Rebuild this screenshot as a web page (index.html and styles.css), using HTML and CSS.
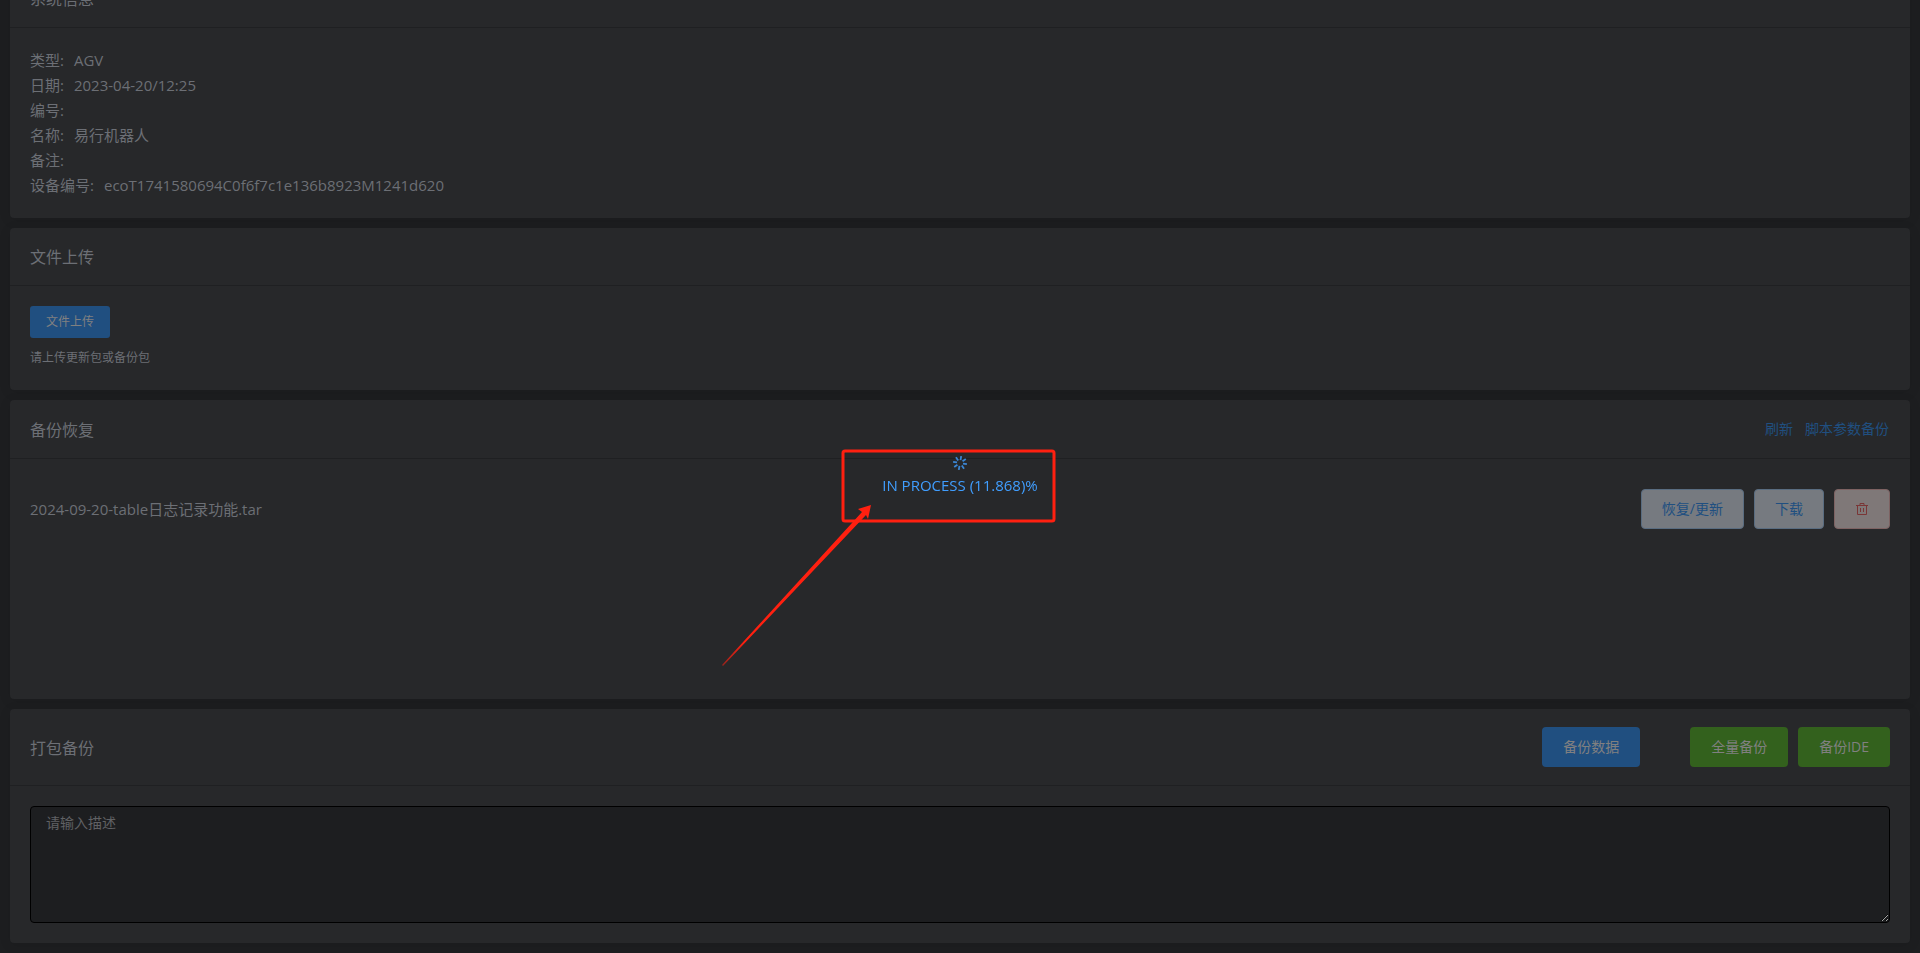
FILE: index.html
```html
<!DOCTYPE html>
<html lang="zh-CN">
<head>
  <meta charset="UTF-8">
  <meta name="viewport" content="width=device-width, initial-scale=1.0">
  <title>系统信息</title>
  <link rel="stylesheet" href="styles.css">
</head>
<body>

  <main class="page">

    <section class="card">
      <div class="card-header">
        <h2>系统信息</h2>
      </div>
      <div class="card-body">
        <dl class="info">
          <div><dt>类型:</dt><dd>AGV</dd></div>
          <div><dt>日期:</dt><dd>2023-04-20/12:25</dd></div>
          <div><dt>编号:</dt><dd></dd></div>
          <div><dt>名称:</dt><dd>易行机器人</dd></div>
          <div><dt>备注:</dt><dd></dd></div>
          <div><dt>设备编号:</dt><dd>ecoT1741580694C0f6f7c1e136b8923M1241d620</dd></div>
        </dl>
      </div>
    </section>

    <section class="card">
      <div class="card-header">
        <h2>文件上传</h2>
      </div>
      <div class="card-body">
        <button type="button" class="btn btn-primary btn-small">文件上传</button>
        <p class="tip">请上传更新包或备份包</p>
      </div>
    </section>

    <section class="card">
      <div class="card-header">
        <h2>备份恢复</h2>
        <div class="links">
          <a href="#">刷新</a>
          <a href="#">脚本参数备份</a>
        </div>
      </div>
      <div class="card-body backup-list">
        <div class="backup-item">
          <span>2024-09-20-table日志记录功能.tar</span>
          <div class="actions">
            <button type="button" class="btn btn-plain">恢复/更新</button>
            <button type="button" class="btn btn-plain">下载</button>
            <button type="button" class="btn btn-danger" aria-label="删除">
              <svg width="14" height="14" viewBox="0 0 14 14" fill="none" stroke="currentColor">
                <path d="M1 3.500h12M2.500 3.500v9h9v-9M5 3V1.500h4V3M5.500 6v4M8.500 6v4"/>
              </svg>
            </button>
          </div>
        </div>
      </div>
    </section>

    <section class="card">
      <div class="card-header">
        <h2><label for="desc">打包备份</label></h2>
        <div class="actions">
          <button type="button" class="btn btn-primary btn-data">备份数据</button>
          <button type="button" class="btn btn-success">全量备份</button>
          <button type="button" class="btn btn-success">备份IDE</button>
        </div>
      </div>
      <div class="card-body">
        <textarea id="desc" placeholder="请输入描述"></textarea>
      </div>
    </section>

  </main>

  <!-- loading -->
  <div class="loading">
    <svg class="spinner" width="14" height="14" viewBox="0 0 14 14" stroke="currentColor" stroke-width="1.8">
      <g transform="rotate(10 7 7)">
        <path d="M7 0v4M7 10v4M0 7h4M10 7h4M2 2l2.800 2.800M9.200 9.200L12 12M2 12l2.800-2.800M9.200 4.800L12 2"/>
      </g>
    </svg>
    <p>IN PROCESS (11.868)%</p>
    <svg class="mark" width="340" height="220" viewBox="0 0 340 220">
      <defs>
        <linearGradient id="tail" x1="0" y1="1" x2="1" y2="0">
          <stop offset="0" stop-color="#ff2010" stop-opacity="0.5"/>
          <stop offset="0.15" stop-color="#ff2010"/>
        </linearGradient>
      </defs>
      <rect x="123" y="5" width="211" height="70" rx="2" fill="none" stroke="#ff2010" stroke-width="3"/>
      <path d="M2 219L142 66L138 63L151 59L148 73L146 69L3 220Z" fill="url(#tail)"/>
    </svg>
  </div>

</body>
</html>
```

FILE: styles.css
```css
* {
  margin: 0;
  padding: 0;
  box-sizing: border-box;
}

body {
  font-family: "Open Sans", "Noto Sans CJK SC", sans-serif;
  font-size: 15px;
  line-height: 25px;
  color: #6c6f75;
  background: #1d1e20;
  overflow: hidden;
}

/* page is scrolled a little past the first header */
.page {
  display: flex;
  flex-direction: column;
  gap: 10px;
  margin-top: -30px;
  padding: 0 10px 10px;
}

.card {
  background: #27282a;
  border-radius: 4px;
  box-shadow: 0 2px 12px rgba(0, 0, 0, 0.1);
}

.card-header {
  display: flex;
  justify-content: space-between;
  align-items: center;
  padding: 18px 20px;
  border-bottom: 1px solid #1f2022;
}

h2 {
  padding-top: 2px;
  font-size: 16px;
  font-weight: normal;
  line-height: 19px;
}

.card-body {
  padding: 20px;
}

.info div {
  display: flex;
  gap: 10px;
}

.btn {
  height: 40px;
  padding: 0 20px;
  font-family: inherit;
  font-size: 14px;
  line-height: 14px;
  color: #808080;
  border: 1px solid transparent;
  border-radius: 4px;
  cursor: pointer;
}

.btn-small {
  display: block;
  height: 32px;
  padding: 0 15px;
  font-size: 12px;
  border-radius: 3px;
}

.btn-primary {
  background: #204f80;
}

.btn-success {
  background: #33611d;
}

.btn-plain {
  color: #204f80;
  background: #767a80;
  border-color: #596c80;
}

.btn-danger {
  color: #7a3636;
  background: #7f7878;
  border-color: #7d6262;
}

.btn svg {
  display: block;
}

.btn-data {
  margin-right: 40px;
}

.tip {
  margin-top: 7px;
  font-size: 12px;
}

.links {
  display: flex;
  gap: 12px;
  padding-right: 1px;
  font-size: 14px;
  line-height: 22px;
}

.links a {
  color: #204f80;
  text-decoration: none;
}

.actions {
  display: flex;
  gap: 10px;
}

.backup-list {
  height: 240px;
  padding-top: 30px;
}

.backup-item {
  display: flex;
  justify-content: space-between;
  align-items: center;
}

textarea {
  display: block;
  width: 100%;
  height: 117px;
  padding: 5px 15px;
  font-family: inherit;
  font-size: 14px;
  line-height: 21px;
  color: #808080;
  background: #1d1e20;
  border: 1px solid #000;
  border-radius: 4px;
  resize: vertical;
}

textarea::placeholder {
  color: #606164;
}

/* Loading */
.loading {
  position: fixed;
  inset: 0;
  display: flex;
  flex-direction: column;
  justify-content: center;
  align-items: center;
  gap: 3px;
  color: #409eff;
}

.spinner {
  opacity: 0.8;
}

.mark {
  position: absolute;
  top: calc(50% - 31px);
  left: calc(50% - 240px);
}
```
